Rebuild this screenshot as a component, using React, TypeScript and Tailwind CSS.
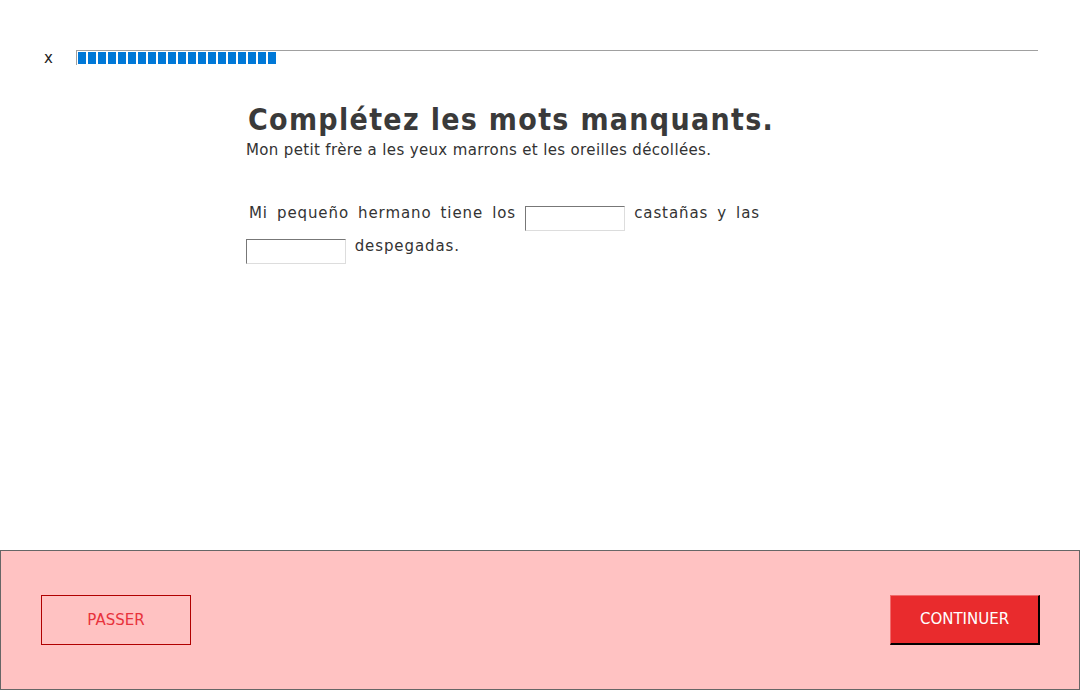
export default function App() {
  const segments = Array.from({ length: 20 });

  return (
    <div className="flex h-[690px] w-[1080px] flex-col bg-white font-['DejaVu_Sans',sans-serif] text-[#333]">
      <div className="flex items-start pt-[50px]">
        <button className="ml-[44px] w-[32px] text-left text-[15px] leading-[16px] text-[#222]">
          x
        </button>
        <div className="flex h-[15px] w-[962px] gap-[2px] border-l border-t border-[#a0a0a0] pl-[1px] pt-[1px]">
          {segments.map((_, i) => (
            <div key={i} className="h-[12px] w-[8px] bg-[#0078d7]" />
          ))}
        </div>
      </div>

      <div className="ml-[246px] w-[514px] pt-[36px]">
        <h1 className="ml-[2px] whitespace-nowrap font-['DejaVu_Sans_Condensed','DejaVu_Sans',sans-serif] text-[30px] font-bold leading-[36px] tracking-[1.3px] text-[#3a3a3a]">
          Complétez les mots manquants.
        </h1>
        <p className="mt-[2px] text-[15px] leading-[20px] tracking-[0.35px] text-[#333]">
          Mon petit frère a les yeux marrons et les oreilles décollées.
        </p>

        <p className="mt-[38px] text-justify text-[15px] leading-[31px] tracking-[0.9px] text-[#333] [text-align-last:left]">
          <span className="ml-[3px]">Mi pequeño hermano tiene los</span>{" "}
          <input
            type="text"
            className="h-[25px] w-[100px] border border-t-[#777] border-l-[#777] border-b-[#ddd] border-r-[#ddd] bg-white align-[-5px]"
          />{" "}
          castañas y las{" "}
          <input
            type="text"
            className="mr-[3px] h-[25px] w-[100px] border border-t-[#777] border-l-[#777] border-b-[#ddd] border-r-[#ddd] bg-white align-[-5px]"
          />{" "}
          despegadas.
        </p>
      </div>

      <div className="mt-auto flex h-[140px] items-center justify-between border border-[#666] bg-[#ffc2c2] pl-[40px] pr-[39px]">
        <button className="h-[50px] w-[150px] border border-[#b00000] text-[15px] text-[#e8323c]">
          PASSER
        </button>
        <button className="h-[50px] w-[150px] border border-b-2 border-r-2 border-t-[#f06a6a] border-l-[#f06a6a] border-b-black border-r-black bg-[#e92b2d] text-[15px] text-white">
          CONTINUER
        </button>
      </div>
    </div>
  );
}
